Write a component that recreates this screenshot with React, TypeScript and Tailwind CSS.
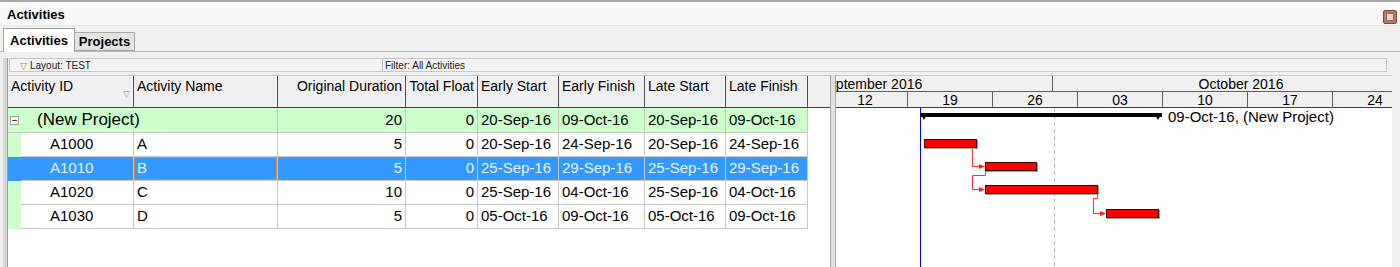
import React from 'react';

type Row = {
  id: string;
  name: string;
  dur: string;
  tf: string;
  es: string;
  ef: string;
  ls: string;
  lf: string;
  selected?: boolean;
};

const rows: Row[] = [
  { id: 'A1000', name: 'A', dur: '5', tf: '0', es: '20-Sep-16', ef: '24-Sep-16', ls: '20-Sep-16', lf: '24-Sep-16' },
  { id: 'A1010', name: 'B', dur: '5', tf: '0', es: '25-Sep-16', ef: '29-Sep-16', ls: '25-Sep-16', lf: '29-Sep-16', selected: true },
  { id: 'A1020', name: 'C', dur: '10', tf: '0', es: '25-Sep-16', ef: '04-Oct-16', ls: '25-Sep-16', lf: '04-Oct-16' },
  { id: 'A1030', name: 'D', dur: '5', tf: '0', es: '05-Oct-16', ef: '09-Oct-16', ls: '05-Oct-16', lf: '09-Oct-16' },
];

const weeks = ['12', '19', '26', '03', '10', '17', '24'];

function Gantt() {
  return (
    <svg width="560" height="159" className="block">
      {/* data date + month line */}
      <line x1="84.5" y1="0" x2="84.5" y2="159" stroke="#0000ff" strokeWidth="1" />
      <line x1="218.5" y1="0" x2="218.5" y2="159" stroke="#b8b8b8" strokeWidth="1" strokeDasharray="4 3" />

      {/* project summary bar */}
      <rect x="84" y="5" width="242" height="4" fill="#000" />
      <polygon points="84,5 92,5 88,12" fill="#000" />
      <polygon points="318,5 326,5 322,12" fill="#000" />
      <text x="332" y="14" fontSize="15" fontFamily="Liberation Sans, Arial, sans-serif" fill="#000">
        09-Oct-16, (New Project)
      </text>

      {/* relationships */}
      <g stroke="#ff3030" strokeWidth="1" fill="none">
        <polyline points="136.5,40 136.5,58.5 146,58.5" />
        <polyline points="149.5,63 149.5,67.5 136.5,67.5 136.5,81.5 146,81.5" />
        <polyline points="261.5,86 261.5,90.5 257.5,90.5 257.5,105.5 267,105.5" />
      </g>
      <g fill="#ff2020">
        <polygon points="143,56 149,58.5 143,61" />
        <polygon points="143,79 149,81.5 143,84" />
        <polygon points="264,103 270,105.5 264,108" />
      </g>

      {/* activity bars */}
      {[
        { x: 88, w: 53, y: 31 },
        { x: 149, w: 52, y: 54 },
        { x: 149, w: 113, y: 77 },
        { x: 270, w: 53, y: 101 },
      ].map((b, i) => (
        <g key={i}>
          <rect x={b.x + 1} y={b.y + 1} width={b.w} height="9" fill="#a0a0a0" />
          <rect x={b.x + 0.5} y={b.y + 0.5} width={b.w - 1} height="8" fill="#ff0000" stroke="#3a0000" strokeWidth="1" />
        </g>
      ))}
    </svg>
  );
}

export default function App() {
  const cell = 'border-r border-b border-[#c8c8c8] h-full flex items-center px-[3px] whitespace-nowrap overflow-hidden';
  const head =
    'border-r border-[#505050] h-full pt-[2px] px-[3px] whitespace-nowrap overflow-hidden text-[14px] leading-[17px]';

  return (
    <div
      className="w-[1400px] h-[267px] overflow-hidden bg-white text-black flex flex-col"
      style={{ fontFamily: '"Liberation Sans", Arial, sans-serif' }}
    >
      {/* top border */}
      <div className="h-[2px] bg-[#a8a8a8] shrink-0" />

      {/* title bar */}
      <div className="h-[24px] shrink-0 flex items-center justify-between pl-[7px] pr-[3px] bg-[#f8f8f8] border-b border-[#dfe5ec]">
        <span className="font-bold text-[13px] mt-[2px]">Activities</span>
        <div className="w-[14px] h-[14px] mt-[6px] rounded-[2px] border border-[#7a4a3a] bg-[#c8705a] flex items-center justify-center">
          <div className="w-[8px] h-[8px] bg-[#e8d8d0] border border-[#907060]" />
        </div>
      </div>

      {/* tabs */}
      <div className="h-[25px] shrink-0 bg-[#f0f0f0] flex items-end pl-[3px] relative">
        <div className="h-[24px] w-[72px] justify-center flex items-center bg-white border border-b-0 border-[#a0a0a0] font-bold text-[13px] relative z-10 -mb-[1px]">
          Activities
        </div>
        <div className="h-[19px] w-[60px] justify-center flex items-center bg-[#e4e4e4] border border-l-0 border-[#a8a8a8] font-bold text-[13px]">
          Projects
        </div>
      </div>

      {/* panel */}
      <div className="flex-1 flex flex-col border-t border-[#b8b8b8] bg-[#f0f0f0] pt-[6px] pl-[3px] pr-[8px]">
        <div className="flex-1 flex flex-col border-l-[5px] border-[#d8d8d8] relative">
          <div className="absolute left-[-1px] top-0 bottom-0 w-[1px] bg-[#a0a0a0]" />
          {/* layout bar */}
          <div className="h-[14px] shrink-0 ml-[1px] mr-[5px] flex text-[10px] leading-[13px] bg-[#f3f3f3] border border-[#c8c8c8]">
            <div className="w-[373px] border-r border-[#c0c0c0] pl-[10px] text-[#202020]">
              <span className="text-[#808080] text-[9px] mr-[3px]">▽</span>Layout: TEST
            </div>
            <div className="pl-[2px] text-[#202020]">Filter: All Activities</div>
          </div>
          <div className="h-[3px] shrink-0" />

          <div className="flex-1 flex bg-white">
            {/* table */}
            <div className="w-[822px] shrink-0 flex flex-col">
              <div className="h-[33px] shrink-0 flex bg-[#f0f0f0] border-b border-[#404040] border-t border-t-[#c8c8c8]">
                <div className={`${head} w-[126px] relative`}>
                  Activity ID
                  <span className="absolute right-[3px] top-[10px] text-[9px] text-[#a0a0a0]">▽</span>
                </div>
                <div className={`${head} w-[144px]`}>Activity Name</div>
                <div className={`${head} w-[128px] text-right`}>Original Duration</div>
                <div className={`${head} w-[72px] text-right`}>Total Float</div>
                <div className={`${head} w-[81px]`}>Early Start</div>
                <div className={`${head} w-[86px]`}>Early Finish</div>
                <div className={`${head} w-[81px]`}>Late Start</div>
                <div className={`${head} w-[82px]`}>Late Finish</div>
                <div className="w-[22px] h-full" />
              </div>

              {/* project row */}
              <div className="h-[25px] shrink-0 flex bg-[#ccffcc] text-[15px] w-[800px]">
                <div className="w-[270px] h-full flex items-center border-r border-b border-[#c8c8c8] whitespace-nowrap">
                  <span className="ml-[2px] w-[9px] h-[9px] border border-[#a0a0a0] bg-white flex items-center justify-center">
                    <span className="w-[5px] h-[1px] bg-[#404040]" />
                  </span>
                  <span className="ml-[18px] text-[17px]">(New Project)</span>
                </div>
                <div className={`${cell} w-[128px] justify-end`}>20</div>
                <div className={`${cell} w-[72px] justify-end`}>0</div>
                <div className={`${cell} w-[81px]`}>20-Sep-16</div>
                <div className={`${cell} w-[86px]`}>09-Oct-16</div>
                <div className={`${cell} w-[81px]`}>20-Sep-16</div>
                <div className={`${cell} w-[82px]`}>09-Oct-16</div>
              </div>

              {rows.map((r) => {
                const sel = r.selected;
                const bg = sel ? 'bg-[#3399ff] text-[#eaf4ff]' : 'bg-white';
                return (
                  <div key={r.id} className="h-[24px] shrink-0 flex text-[15px] w-[800px]">
                    <div className={`w-[13px] h-full shrink-0 ${sel ? 'bg-[#3399ff]' : 'bg-[#ccffcc]'}`} />
                    <div className={`flex ${bg}`}>
                      <div className={`${cell} w-[113px] pl-[29px]`}>{r.id}</div>
                      <div className={`${cell} w-[144px] ${sel ? 'shadow-[inset_0_0_0_1px_#e08a30]' : ''}`}>
                        {r.name}
                      </div>
                      <div className={`${cell} w-[128px] justify-end`}>{r.dur}</div>
                      <div className={`${cell} w-[72px] justify-end`}>{r.tf}</div>
                      <div className={`${cell} w-[81px]`}>{r.es}</div>
                      <div className={`${cell} w-[86px]`}>{r.ef}</div>
                      <div className={`${cell} w-[81px]`}>{r.ls}</div>
                      <div className={`${cell} w-[82px]`}>{r.lf}</div>
                    </div>
                  </div>
                );
              })}
            </div>

            {/* splitter */}
            <div className="w-[6px] shrink-0 bg-[#e0e0e0] border-x border-[#a8a8a8]" />

            {/* gantt */}
            <div className="flex-1 flex flex-col overflow-hidden">
              <div className="h-[33px] shrink-0 flex flex-col bg-[#f0f0f0] border-b border-[#404040] border-t border-t-[#c8c8c8] text-[14px] leading-[16px]">
                <div className="h-[16px] flex border-b border-[#606060]">
                  <div className="ml-[-147px] w-[364px] shrink-0 text-center border-r border-[#606060]">September 2016</div>
                  <div className="w-[376px] shrink-0 text-center">October 2016</div>
                </div>
                <div className="flex-1 flex">
                  {weeks.map((w, i) => (
                    <div
                      key={w}
                      className={`w-[85px] shrink-0 text-center border-r border-[#606060] ${i === 0 ? 'ml-[-13px]' : ''}`}
                    >
                      {w}
                    </div>
                  ))}
                </div>
              </div>
              <Gantt />
            </div>
          </div>
        </div>
      </div>
    </div>
  );
}
